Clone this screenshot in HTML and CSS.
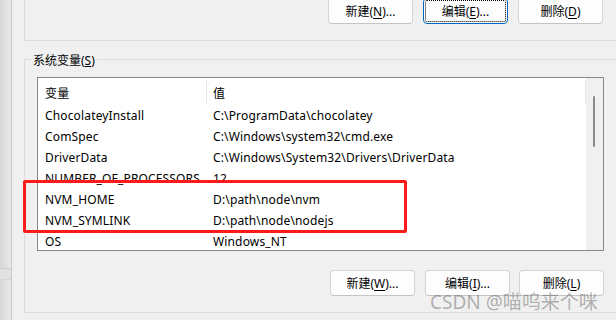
FILE: index.html
```html
<!DOCTYPE html>
<html lang="zh-CN">
<head>
    <meta charset="UTF-8">
    <title>环境变量</title>
    <link rel="stylesheet" href="styles.css">
</head>
<body>
    <div class="edge">
        <div class="edge-band"></div>
    </div>
    <div class="main">
        <div class="group user-group">
            <div class="buttons top-buttons">
                <button class="btn">新建(<u>N</u>)...</button>
                <button class="btn focused">编辑(<u>E</u>)...</button>
                <button class="btn">删除(<u>D</u>)</button>
            </div>
        </div>

        <div class="group sys-group">
            <span class="group-label">系统变量(<u>S</u>)</span>
            <div class="listbox">
                <div class="list">
                    <div class="row head">
                        <div class="col name">变量</div>
                        <div class="col value">值</div>
                    </div>
                    <div class="row"><div class="col name">ChocolateyInstall</div><div class="col value">C:\ProgramData\chocolatey</div></div>
                    <div class="row"><div class="col name">ComSpec</div><div class="col value">C:\Windows\system32\cmd.exe</div></div>
                    <div class="row"><div class="col name">DriverData</div><div class="col value">C:\Windows\System32\Drivers\DriverData</div></div>
                    <div class="row"><div class="col name">NUMBER_OF_PROCESSORS</div><div class="col value">12</div></div>
                    <div class="row"><div class="col name">NVM_HOME</div><div class="col value">D:\path\node\nvm</div></div>
                    <div class="row"><div class="col name">NVM_SYMLINK</div><div class="col value">D:\path\node\nodejs</div></div>
                    <div class="row"><div class="col name">OS</div><div class="col value">Windows_NT</div></div>
                </div>
                <div class="scrollbar">
                    <div class="thumb"></div>
                </div>
            </div>
            <div class="buttons bottom-buttons">
                <button class="btn">新建(<u>W</u>)...</button>
                <button class="btn">编辑(<u>I</u>)...</button>
                <button class="btn">删除(<u>L</u>)</button>
            </div>
        </div>
    </div>

    <div class="highlight"></div>
    <div class="watermark">CSDN @喵呜来个咪</div>
</body>
</html>
```

FILE: styles.css
```css
body {
    margin: 0;
    width: 616px;
    height: 320px;
    overflow: hidden;
    display: flex;
    background: #f0f0f0;
    font-family: "Noto Sans", "Noto Sans CJK SC", sans-serif;
    font-size: 12px;
    color: #000;
    position: relative;
}
.edge {
    width: 12px;
    flex-shrink: 0;
    background: linear-gradient(to right, #d6d6d6, #e9e9e9);
    border-right: 1px solid #c9c9c9;
    padding-top: 268px;
    box-sizing: border-box;
}
.edge-band {
    height: 10px;
    border-top: 1px solid #cdcdcd;
    border-bottom: 1px solid #d6d6d6;
    background: #e2e2e2;
}
.main {
    flex: 1;
    padding-left: 12px;
    margin-right: -10px;
}
.group {
    border: 1px solid #dcdcdc;
}
.user-group {
    border-top: none;
    height: 42px;
}
.buttons {
    display: flex;
    justify-content: flex-end;
    gap: 10px;
    padding-right: 22px;
}
.top-buttons {
    margin-top: -2px;
}
.btn {
    width: 85px;
    height: 26px;
    padding: 0;
    background: #fdfdfd;
    border: 1px solid #d4d4d4;
    border-bottom-color: #c4c4c4;
    border-radius: 4px;
    font-family: inherit;
    font-size: 12px;
    color: #000;
}
.btn u {
    text-underline-offset: 2px;
}
.btn.focused {
    border-color: #0067c0;
    outline: 1px dotted #000;
    outline-offset: -3px;
}
.sys-group {
    position: relative;
    margin-top: 18px;
    padding: 17px 21px 16px 12px;
}
.group-label {
    position: absolute;
    left: 6px;
    top: -6px;
    padding: 0 2px;
    background: #f0f0f0;
    line-height: 14px;
}
.listbox {
    display: flex;
    height: 172px;
    border: 1px solid #828790;
    background: #fff;
}
.list {
    flex: 1;
}
.row {
    display: flex;
    height: 21px;
    padding-top: 4px;
    box-sizing: border-box;
    align-items: center;
    white-space: nowrap;
    letter-spacing: 0.15px;
}
.row.head {
    height: 25px;
    padding-top: 0;
}
.col {
    overflow: hidden;
}
.col.name {
    width: 169px;
    padding-left: 7px;
    box-sizing: border-box;
}
.col.value {
    flex: 1;
    padding-left: 6px;
}
.head .col {
    height: 23px;
    line-height: 27px;
    margin-top: 1px;
    border-right: 1px solid #e5e5e5;
}
.scrollbar {
    width: 17px;
    background: #f0f0f0;
    padding: 18px 0 0 7px;
    box-sizing: border-box;
}
.thumb {
    width: 2px;
    height: 51px;
    background: #8b8b8b;
    border-radius: 1px;
}
.bottom-buttons {
    margin-top: 19px;
    padding-right: 0;
    gap: 9px;
}
.bottom-buttons .btn:first-child {
    margin-right: 1px;
}
.highlight {
    position: absolute;
    left: 23px;
    top: 180px;
    width: 378px;
    height: 47px;
    border: 3px solid #ff1a1a;
    border-radius: 2px;
}
.watermark {
    position: absolute;
    left: 430px;
    top: 287px;
    font-size: 19px;
    color: rgba(90, 90, 90, 0.45);
    white-space: nowrap;
}
```
